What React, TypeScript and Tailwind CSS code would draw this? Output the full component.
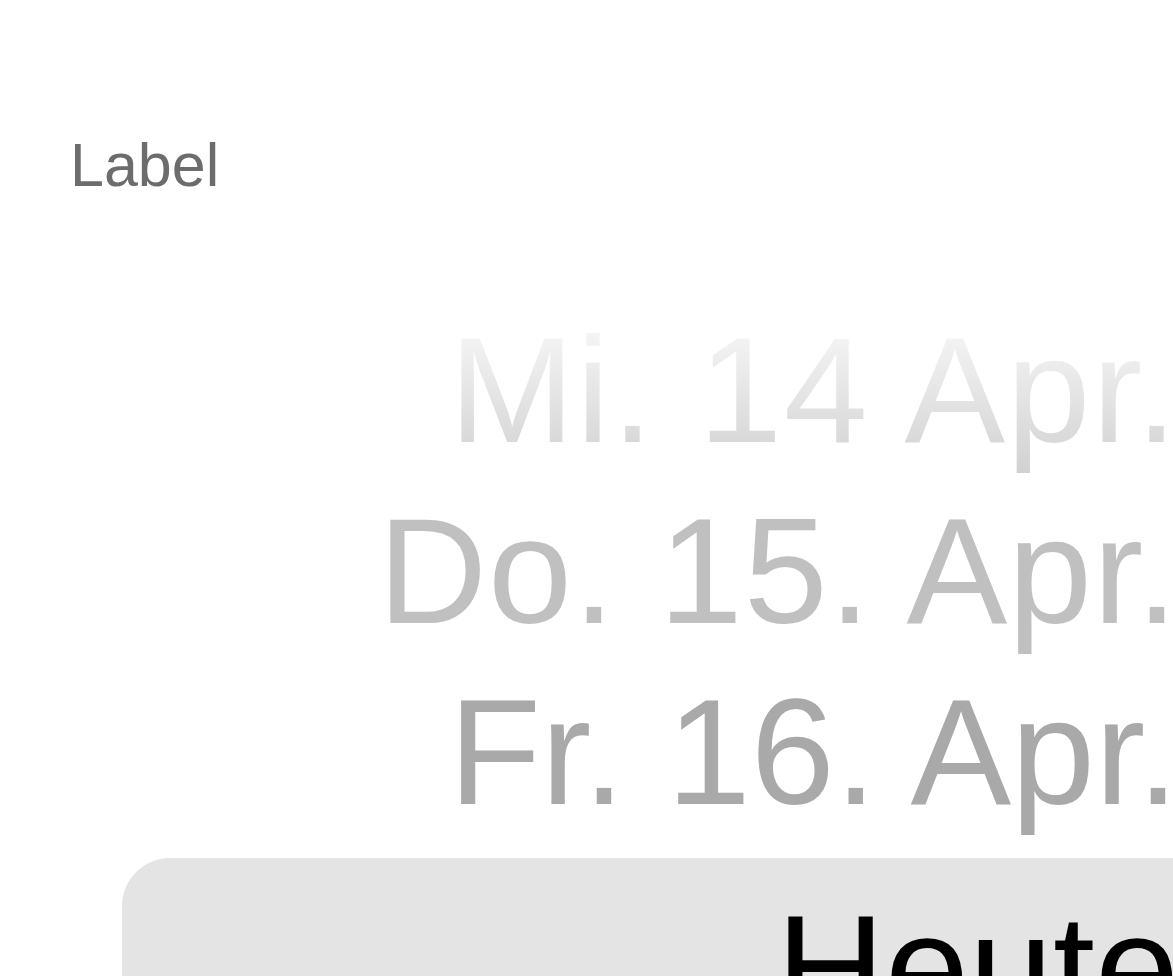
import React from "react";

const rows = [
  {
    label: "Mi. 14 Apr.",
    className:
      "tracking-[1.5px] bg-gradient-to-b from-[#fbfbfb] to-[#d1d1d1] bg-clip-text text-transparent",
  },
  { label: "Do. 15. Apr.", className: "tracking-[1px] text-[#c0c0c0]" },
  { label: "Fr. 16. Apr.", className: "text-[#a9a9a9]" },
];

const App: React.FC = () => {
  return (
    <div
      className="w-[1173px] h-[976px] overflow-hidden bg-white"
      style={{ fontFamily: '"Liberation Sans", Arial, Helvetica, sans-serif' }}
    >
      <div className="pt-[135px] pl-[70px]">
        <span className="block text-[61px] leading-[61px] text-[#6c6c6c]">
          Label
        </span>
      </div>

      {/* Date wheel */}
      <div className="w-[1179px] mt-[103px] text-right text-[151px] leading-[181px]">
        {rows.map((row) => (
          <div key={row.label} className="h-[181px] whitespace-nowrap">
            <span className={row.className}>{row.label}</span>
          </div>
        ))}

        <div className="mt-[16px] ml-[122px] mr-[-80px] h-[220px] rounded-[48px] bg-[#e4e4e4] pt-[19px] pr-[80px]">
          <span className="text-black whitespace-nowrap">Heute</span>
        </div>
      </div>
    </div>
  );
};

export default App;
